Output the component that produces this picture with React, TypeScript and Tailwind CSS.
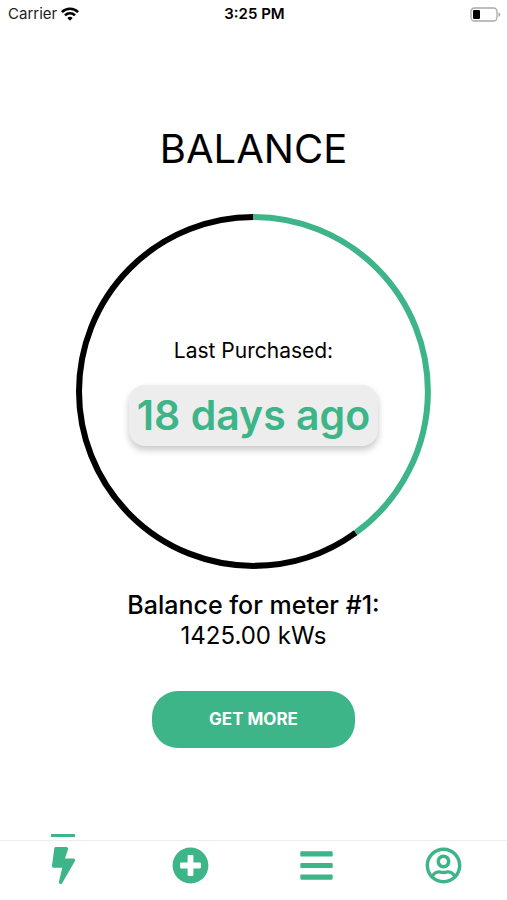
import type { ReactNode } from "react"
import { FaBars, FaBolt, FaPlusCircle, FaRegUserCircle } from "react-icons/fa"

const RADIUS = 174
const CIRCUMFERENCE = 2 * Math.PI * RADIUS

function StatusBar() {
  return (
    <header className="grid h-7 grid-cols-3 items-center pl-2 pr-1.5 text-[15px] text-[#222]">
      <div className="flex items-center gap-1">
        <span>Carrier</span>
        <svg viewBox="0 0 18 14" className="h-3.5 w-[18px]" fill="none" stroke="black" strokeWidth="2.6" aria-label="Wi-Fi">
          <path d="M0.9 5.1a11.5 11.5 0 0 1 16.2 0" />
          <path d="M4 8.4a7 7 0 0 1 10 0" />
          <path d="M9 13.8 6.3 11a3.8 3.8 0 0 1 5.4 0z" fill="black" stroke="none" />
        </svg>
      </div>
      <time className="text-center font-semibold text-black">3:25 PM</time>
      <svg viewBox="0 0 31 15" className="h-[15px] w-[31px] justify-self-end" aria-label="Battery">
        <rect x="1" y="1" width="26" height="13" rx="3.5" fill="white" stroke="#a8a8a8" strokeWidth="1.3" />
        <rect x="3" y="3" width="7" height="9" rx="1.2" fill="black" />
        <path d="M28.5 5.2c2.4 1 2.4 3.6 0 4.6z" fill="#a8a8a8" />
      </svg>
    </header>
  )
}

function PurchaseRing({ percent, children }: { percent: number; children: ReactNode }) {
  const used = (CIRCUMFERENCE * percent) / 100
  const rest = CIRCUMFERENCE - used

  return (
    <div className="grid w-[70%] max-w-md place-items-center">
      <svg viewBox="0 0 354 354" className="col-start-1 row-start-1 w-full" fill="none" strokeWidth="6">
        <g transform="rotate(-90 177 177)">
          <circle cx="177" cy="177" r={RADIUS} stroke="black" strokeDasharray={`${rest} ${used}`} strokeDashoffset={-used} />
          <circle cx="177" cy="177" r={RADIUS} stroke="#3eb489" strokeDasharray={`${used} ${rest}`} />
        </g>
      </svg>
      <div className="col-start-1 row-start-1 flex flex-col items-center gap-5">{children}</div>
    </div>
  )
}

const tabs = [
  { label: "Balance", icon: FaBolt, active: true },
  { label: "Add", icon: FaPlusCircle, active: false },
  { label: "Menu", icon: FaBars, active: false },
  { label: "Profile", icon: FaRegUserCircle, active: false },
]

function TabBar() {
  return (
    <nav className="grid h-[60px] grid-cols-4 border-t border-[#eee]">
      {tabs.map(({ label, icon: Icon, active }) => (
        <a key={label} href="#" aria-label={label} className="relative flex justify-center pt-1.5 text-[#3eb489]">
          {active && <span className="absolute -top-[7px] h-[3px] w-6 bg-[#3eb489]" />}
          <Icon className="size-[37px]" />
        </a>
      ))}
    </nav>
  )
}

export default function App() {
  return (
    <div className="flex min-h-screen flex-col bg-white font-[Inter,Roboto,sans-serif] text-black">
      <StatusBar />

      <main className="flex flex-1 flex-col items-center pt-24">
        <h1 className="text-[40px] leading-[50px]">BALANCE</h1>

        <div className="mt-10 flex w-full justify-center">
          <PurchaseRing percent={40}>
            <p className="text-[21px] leading-7">Last Purchased:</p>
            <p className="rounded-2xl bg-[#ededed] px-2 py-1 text-[41px] font-semibold leading-[53px] text-[#3eb489] shadow-[0_4px_7px_rgba(0,0,0,0.22)]">
              18 days ago
            </p>
          </PurchaseRing>
        </div>

        <h2 className="mt-5 text-[25px] font-medium leading-8">Balance for meter #1:</h2>
        <p className="text-2xl leading-[30px]">1425.00 kWs</p>

        <button
          type="button"
          className="mt-10 h-[57px] w-[40%] rounded-[26px] bg-[#3eb489] text-[17px] font-bold text-white"
        >
          GET MORE
        </button>
      </main>

      <TabBar />
    </div>
  )
}
